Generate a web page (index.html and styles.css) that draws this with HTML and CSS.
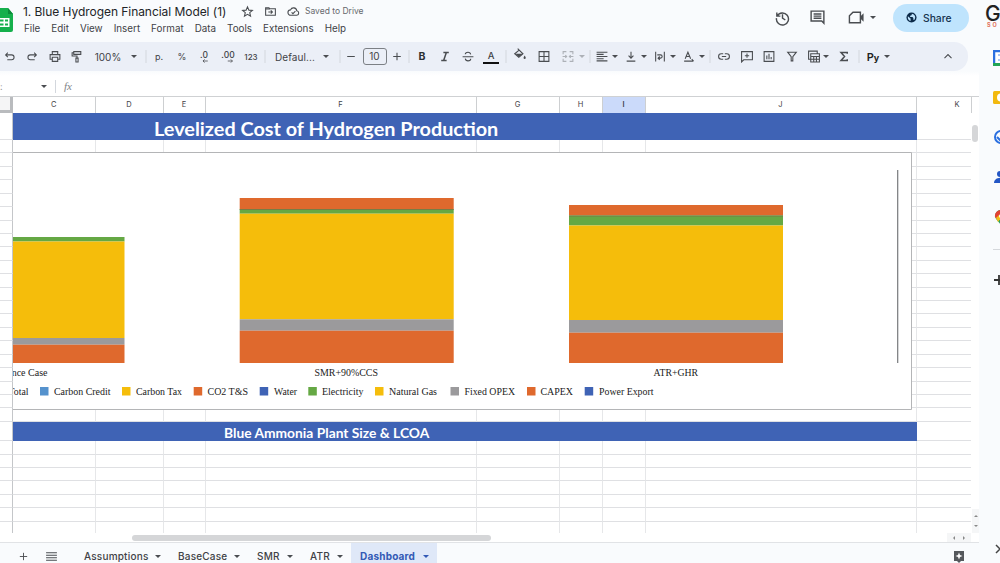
FILE: index.html
```html
<!DOCTYPE html>
<html lang="en">
<head>
    <meta charset="UTF-8">
    <meta name="viewport" content="width=device-width, initial-scale=1.0">
    <title>1. Blue Hydrogen Financial Model (1)</title>
    <link rel="stylesheet" href="styles.css">
</head>
<body>
    <header class="header">
        <svg class="logo" viewBox="0 0 14 26"><path d="M0 1h8l5 6v16a2 2 0 0 1-2 2H0z" fill="#15b04c"/><path d="M8 1l5 6H8z" fill="#0b8a3a"/><path d="M0 11h9.500v9H0z" fill="#fff"/><path d="M0 12.500h3.500v2H0zM5 12.500h3v2H5zM0 16.500h3.500v2H0zM5 16.500h3v2H5z" fill="#15b04c"/></svg>
        <div class="doc">
            <div class="doc-top">
                <span class="doc-title">1. Blue Hydrogen Financial Model (1)</span>
                <svg class="icon star" viewBox="0 0 24 24"><path d="M12 3.500l2.600 6 6.400.5-4.900 4.200 1.500 6.300-5.600-3.400-5.600 3.400 1.500-6.300L3 10l6.400-.5z"/></svg>
                <svg class="icon move" viewBox="0 0 24 24"><path d="M3 5h6l2 2h10v12H3zM3 7.500h8M8 13h7M12.500 10l3 3-3 3"/></svg>
                <svg class="icon cloud" viewBox="0 0 24 24"><path d="M7 19a5 5 0 0 1-.5-10A6 6 0 0 1 18 10.500a4.300 4.300 0 0 1 0 8.500zM8.500 13.500l2.500 2.500 4.500-4.500"/></svg>
                <span class="saved">Saved to Drive</span>
            </div>
            <nav class="menu">
                <span>File</span><span>Edit</span><span>View</span><span>Insert</span><span>Format</span><span>Data</span><span>Tools</span><span>Extensions</span><span>Help</span>
            </nav>
        </div>
        <div class="actions">
            <svg class="icon history" viewBox="0 0 24 24"><path d="M4 5v5h5M4.500 10A8.500 8.500 0 1 1 3.500 13M12 7.500V13l4 2.500"/></svg>
            <svg class="icon comments" viewBox="0 0 24 24"><path d="M3 3h18v17l-3-3H3zM6.500 7h11M6.500 10h11M6.500 13h11"/></svg>
            <svg class="icon meet" viewBox="0 0 24 24"><path d="M7 4.500h10.500v15H2V9.500z"/><path class="solid" d="M17 11l5-5v12l-5-5z"/></svg>
            <i class="caret"></i>
            <button class="share">
                <svg viewBox="0 0 24 24"><circle cx="12" cy="12" r="11" fill="#0b2a49"/><path d="M4 9l6 5v5.500C6 19 3.500 15 4 9zM13 4l-1 3-3 1v3h5l2 2v4l2 .5c3-4 3-9-1-12z" fill="#bfe4fd"/></svg>
                Share
            </button>
        </div>
        <div class="account"><b>G</b><small>SO</small></div>
    </header>

    <div class="layout">
        <main class="main">
            <div class="toolbar">
                <svg class="icon" viewBox="0 0 24 24"><path d="M8 5L4 9l4 4M4 9h11a4.500 4.500 0 0 1 0 9H7"/></svg>
                <svg class="icon" viewBox="0 0 24 24"><path d="M16 5l4 4-4 4M20 9H9a4.500 4.500 0 0 0 0 9h8"/></svg>
                <svg class="icon" viewBox="0 0 24 24"><path d="M7 8V3h10v5M7 17H3V8.500h18V17h-4M7 13.500h10V21H7z"/></svg>
                <svg class="icon" viewBox="0 0 24 24"><path d="M6 3h13v5H6zM6 5H3v6h9v4M10 15h4v7h-4z"/></svg>
                <span class="t-lg">100%</span>
                <i class="caret"></i>
                <i class="sep"></i>
                <span>p.</span>
                <span>%</span>
                <span class="dec">.0<svg viewBox="0 0 8 5"><path d="M8 2.500H2M4 .5l-2 2 2 2"/></svg></span>
                <span class="dec">.00<svg viewBox="0 0 8 5"><path d="M0 2.500h6M4 .5l2 2-2 2"/></svg></span>
                <span class="t-sm">123</span>
                <i class="sep"></i>
                <span class="t-font">Defaul...</span>
                <i class="caret"></i>
                <i class="sep"></i>
                <svg class="icon" viewBox="0 0 24 24"><path d="M5 12h14"/></svg>
                <span class="size">10</span>
                <svg class="icon" viewBox="0 0 24 24"><path d="M5 12h14M12 5v14"/></svg>
                <i class="sep"></i>
                <b>B</b>
                <svg class="icon bold" viewBox="0 0 24 24"><path d="M9 4.500h10M5 19.500h10M14.500 4.500l-5 15"/></svg>
                <svg class="icon" viewBox="0 0 24 24"><path d="M2 12.500h20M17 8c-.5-3-3-4-5-4-3 0-5 1.500-5 4M7 16c.5 3 3 4 5 4 3 0 5-1.500 5-4"/></svg>
                <span class="text-color">A</span>
                <i class="sep"></i>
                <svg class="icon fill" viewBox="0 0 24 24"><path d="M8 1l9 9-7 6-7-6 7-6"/><path class="solid" d="M4 10h13l-7 6zM20 13c3 4 2 6 0 6s-3-2 0-6z"/></svg>
                <svg class="icon" viewBox="0 0 24 24"><path d="M3 3h18v18H3zM12 3v18M3 12h18"/></svg>
                <svg class="icon off" viewBox="0 0 24 24"><path d="M9 3H3v5M3 16v5h6M15 3h6v5M21 16v5h-6M2 12h7M22 12h-7M7 9.500l2.500 2.500L7 14.500M17 9.500L14.500 12l2.500 2.500"/></svg>
                <i class="caret off"></i>
                <i class="sep"></i>
                <svg class="icon" viewBox="0 0 24 24"><path d="M2 4h20M2 8h13M2 12h20M2 16h13M2 20h20"/></svg>
                <i class="caret"></i>
                <svg class="icon" viewBox="0 0 24 24"><path d="M12 3v12M7.500 10.500L12 15l4.500-4.500M4 20.500h16"/></svg>
                <i class="caret"></i>
                <svg class="icon" viewBox="0 0 24 24"><path d="M4 3v18M20 3v18M7 9h6a3 3 0 0 1 0 6H9M11.500 12l-3 3 3 3"/></svg>
                <i class="caret"></i>
                <svg class="icon" viewBox="0 0 24 24"><path d="M5 16l5-12 5 12M7 12h6M3 20.500h17M17 17l3.500 3.500"/></svg>
                <i class="caret"></i>
                <i class="sep"></i>
                <svg class="icon" viewBox="0 0 24 24"><path d="M10.500 7H7a5 5 0 0 0 0 10h3.500M13.500 7H17a5 5 0 0 1 0 10h-3.500M8 12h8"/></svg>
                <svg class="icon" viewBox="0 0 24 24"><path d="M2 3h20v15H6l-4 4zM12 6.500v8M8 10.500h8"/></svg>
                <svg class="icon" viewBox="0 0 24 24"><path d="M3 3h18v18H3zM8 10v7M12 7v10M16 13v4"/></svg>
                <svg class="icon" viewBox="0 0 24 24"><path d="M4 4h16l-6.500 8.500V20h-3v-7.500z"/></svg>
                <svg class="icon table" viewBox="0 0 24 24"><path d="M18 6V2H2v15h4M6 7h16v15H6zM6 12h16M6 17h16M11.500 12v10M16.500 12v10"/></svg>
                <i class="caret"></i>
                <svg class="icon bold" viewBox="0 0 24 24"><path d="M18 7V4.500H6.500l6.500 7.500-6.500 7.500H18V17"/></svg>
                <i class="sep"></i>
                <span class="py">P<small>y</small></span>
                <i class="caret"></i>
                <svg class="icon" viewBox="0 0 24 24"><path d="M5.500 15l6.500-6.500 6.500 6.500"/></svg>
            </div>

            <div class="formula-bar">
                <span class="name-edge">:</span>
                <i class="caret"></i>
                <i class="sep"></i>
                <em>fx</em>
            </div>

            <div class="sheet">
                <div class="columns">
                    <span class="corner"></span><span>C</span><span>D</span><span>E</span><span>F</span><span>G</span><span>H</span><span class="active">I</span><span>J</span><span class="col-k">K</span>
                </div>
                <div class="sheet-body">
                    <div class="rows" id="rows"></div>
                    <div class="scroll-y">
                        <i class="thumb"></i>
                        <span class="arrows"><i class="up"></i><i class="down"></i></span>
                    </div>
                    <svg class="chart" viewBox="13 152 899 258">
                        <path d="M12 152.500H911.500V409.500H12" fill="#fff" stroke="#b4b5b7"/>
                        <path d="M897.700 170V363" stroke="#77797c" stroke-width="1.200"/>
                        <g id="bars"></g>
                        <g id="labels"></g>
                    </svg>
                </div>
                <div class="scroll-x">
                    <i class="thumb"></i>
                    <span class="arrows"><i class="left"></i><i class="right"></i></span>
                </div>
            </div>

            <footer class="tabs">
                <svg class="icon add" viewBox="0 0 24 24"><path d="M4 12h16M12 4v16"/></svg>
                <svg class="icon all" viewBox="0 0 24 24"><path d="M2 5h20M2 9.700h20M2 14.300h20M2 19h20"/></svg>
                <span class="tab assumptions">Assumptions<i class="caret"></i></span>
                <span class="tab basecase">BaseCase<i class="caret"></i></span>
                <span class="tab smr">SMR<i class="caret"></i></span>
                <span class="tab atr">ATR<i class="caret"></i></span>
                <span class="tab dashboard">Dashboard<i class="caret"></i></span>
                <svg class="explore" viewBox="0 0 12 13"><path d="M1 1h10v10H8l-2 2-2-2H1z" fill="#55585c"/><path d="M6 2.500l1 2.500 2.500 1L7 7 6 9.500 5 7 2.500 6 5 5z" fill="#fff"/></svg>
            </footer>
        </main>

        <aside class="side">
            <svg viewBox="0 0 16 16"><path d="M1 1h14v14H1z" fill="#fff" stroke="#2a6fe0" stroke-width="2.500"/><path d="M0 13h15v3H0z" fill="#23a455"/><path d="M5 5h3v5H5" fill="none" stroke="#5b8de8"/></svg>
            <svg viewBox="0 0 16 16"><rect y="1" width="16" height="13" rx="1.500" fill="#f2b90f"/><circle cx="8" cy="7.500" r="4" fill="#fff"/></svg>
            <svg viewBox="0 0 16 16"><circle cx="8" cy="7" r="6" fill="none" stroke="#2a6fe0" stroke-width="2"/><path d="M4 7l3 3 6-7" fill="none" stroke="#2a6fe0" stroke-width="2"/></svg>
            <svg viewBox="0 0 16 16"><circle cx="7" cy="4" r="3" fill="#2457c5"/><path d="M1 13c0-7 13-7 13 0z" fill="#2457c5"/></svg>
            <svg viewBox="0 0 16 16"><path d="M8 15C6 12 2 9 2 6a6 6 0 0 1 12 0c0 3-4 6-6 9z" fill="#28a55b"/><path d="M2 7a6 6 0 0 1 6-7v4L4 9z" fill="#e34234"/><path d="M3 8l3-3 2 3-3 4z" fill="#f4bd18"/><circle cx="8" cy="6" r="2" fill="#fff"/></svg>
            <hr>
            <svg class="plus" viewBox="0 0 16 16"><path d="M3 8h10M8 3v10" stroke="#333" stroke-width="1.800"/></svg>
            <svg class="collapse" viewBox="0 0 16 16"><path d="M5 4l4 4-4 4" fill="none" stroke="#444" stroke-width="1.500"/></svg>
        </aside>
    </div>

    <script src="script.js"></script>
</body>
</html>
```
FILE: styles.css
```css
* {
    box-sizing: border-box;
}
body {
    margin: 0;
    width: 1000px;
    height: 563px;
    overflow: hidden;
    background: #f9fbfd;
    color: #3f4246;
    font-family: Inter, "Liberation Sans", sans-serif;
}
svg {
    display: block;
    flex: none;
}
.icon {
    width: 13px;
    height: 13px;
    fill: none;
    stroke: #4a4d51;
    stroke-width: 2;
}
.icon .solid {
    fill: #4a4d51;
    stroke: none;
}
.icon.bold {
    stroke-width: 2.8;
}
.icon.off {
    stroke: #adb1b7;
}
.caret {
    display: block;
    flex: none;
    width: 0;
    height: 0;
    border: 3px solid transparent;
    border-top: 3px solid #4a4d51;
    border-bottom: 0;
}
.caret.off {
    border-top-color: #adb1b7;
}
.sep {
    width: 1px;
    height: 13px;
    background: #d3d7dd;
}

/* header */
.header {
    display: flex;
    height: 42px;
    overflow: hidden;
}
.logo {
    width: 14px;
    height: 26px;
    margin: 7px 9px 0 0;
}
.doc {
    flex: none;
    width: 400px;
    padding-top: 2px;
}
.doc-top {
    display: flex;
    align-items: center;
    height: 18px;
}
.doc-title {
    width: 203px;
    color: #222427;
    font-size: 12px;
    letter-spacing: -0.05px;
    white-space: nowrap;
}
.star {
    margin-left: 15px;
}
.move {
    margin-left: 10px;
}
.cloud {
    margin-left: 10px;
}
.saved {
    margin-left: 5px;
    color: #66696d;
    font-size: 8.5px;
    white-space: nowrap;
}
.menu {
    display: flex;
    gap: 11px;
    padding: 2px 0 0 1px;
    font-size: 9.8px;
    letter-spacing: 0.02px;
    line-height: 13px;
}
.actions {
    display: flex;
    align-items: center;
    flex: none;
    height: 35px;
    margin-left: 351px;
}
.actions .icon {
    width: 17px;
    height: 17px;
}
.comments {
    margin-left: 18px;
}
.meet {
    margin-left: 22px;
}
.actions .caret {
    margin-left: 5px;
}
.share {
    display: flex;
    align-items: center;
    gap: 6px;
    width: 76px;
    height: 28px;
    margin-left: 17px;
    padding: 0 0 0 13px;
    border: 0;
    border-radius: 14px;
    background: #bfe4fd;
    color: #16324e;
    font: 500 10.3px Inter, sans-serif;
}
.share svg {
    width: 11px;
    height: 11px;
}
.account {
    flex: none;
    width: 40px;
    margin-left: 16px;
    padding-top: 3px;
    color: #222;
}
.account b {
    display: block;
    height: 20px;
    font: 500 21px/21px Inter, sans-serif;
}
.account small {
    display: block;
    padding-left: 2px;
    color: #e2725b;
    font: 700 5.5px/5px Inter, sans-serif;
    letter-spacing: 2px;
}

.layout {
    display: flex;
    height: 521px;
}
.main {
    flex: none;
    width: 979px;
}

/* each track runs from the centre of one tool to the centre of the next */
.toolbar {
    display: grid;
    grid-template-columns: 22px 23px 22px 31px 26px 12px 13px 23px 22px 24px 23px 14px 30px 31px 14px 11px 23.5px 22.5px 12px 13px 23px 23px 23px 14.5px 14.5px 24px 24px 14px 7.5px 12.5px 13px 16px 13px 16px 13px 16px 13px 8px 14px 23px 22px 23px 22px 12px 18px 15px 14px 14px 61px 20px;
    align-items: center;
    width: 968px;
    height: 29px;
    padding-left: 10px;
    border-radius: 0 14px 14px 0;
    background: #ebeff7;
    font-size: 9px;
}
.toolbar > * {
    justify-self: start;
    transform: translateX(-50%);
    white-space: nowrap;
}
.toolbar .t-lg {
    font-size: 10px;
}
.toolbar .t-sm {
    font-size: 8px;
    font-weight: 500;
}
.toolbar .t-font {
    font-size: 10px;
    letter-spacing: 0.1px;
}
.dec {
    display: flex;
    flex-direction: column;
    align-items: flex-end;
    font-size: 8.5px;
    font-weight: 500;
    line-height: 8px;
}
.dec svg {
    width: 7px;
    height: 4px;
    fill: none;
    stroke: #4a4d51;
}
.size {
    width: 24px;
    height: 17px;
    border: 1px solid #7c8085;
    border-radius: 3px;
    font-size: 10px;
    line-height: 15px;
    text-align: center;
}
.toolbar b {
    color: #2d3033;
    font-size: 10.5px;
}
.text-color {
    width: 16px;
    border-bottom: 2px solid #111;
    font-size: 9.5px;
    font-weight: 500;
    line-height: 12px;
    text-align: center;
}
.toolbar .fill {
    width: 14px;
    height: 14px;
    margin-bottom: 3px;
}
.toolbar .table {
    width: 14px;
}
.py {
    color: #222;
    font-size: 11px;
    font-weight: 600;
}
.py small {
    font-size: 9px;
    font-weight: 700;
}

/* formula bar */
.formula-bar {
    display: flex;
    align-items: center;
    height: 26px;
    padding-top: 5px;
    border-bottom: 1px solid #cfd1d3;
    background: linear-gradient(#f9fbfd, #fff 5px);
}
.name-edge {
    width: 41px;
    color: #999;
    font-size: 9px;
}
.formula-bar .sep {
    margin: 0 8px;
}
.formula-bar em {
    color: #808387;
    font: italic 11px "Liberation Serif", serif;
}

/* sheet */
.sheet {
    background: #fff;
}
.columns,
.row {
    display: grid;
    grid-template-columns: 13px 82.5px 68px 42px 271px 83px 43px 43px 271px 55px;
}
.columns {
    height: 16px;
    font-size: 7.5px;
    line-height: 16px;
    text-align: center;
}
.columns span {
    border-right: 1px solid #cdcfd1;
}
.columns .corner {
    border-right: 3px solid #b9bbbe;
    border-bottom: 3px solid #b9bbbe;
    background: #f5f5f6;
}
.columns .active {
    background: #cbdafa;
    font-weight: 600;
}
.columns .col-k {
    padding-left: 27px;
}
.sheet-body {
    display: flex;
    position: relative;
    height: 420px;
}
.rows {
    width: 971.5px;
    height: 420px;
    overflow: hidden;
}
.row {
    grid-template-rows: 100%;
}
.row span {
    border-right: 1px solid #e6e7e9;
    border-bottom: 1px solid #dfe0e3;
}
.row span:first-child {
    border-right-color: #c4c6c9;
}
.row .band {
    grid-column: 2 / 10;
    border: 0;
    overflow: hidden;
    background: #3f63b5;
    color: #fff;
    font-family: Lato, sans-serif;
    font-weight: 700;
    white-space: nowrap;
}
.band.large {
    padding-left: 141px;
    font-size: 19.85px;
    line-height: 30px;
}
.band.small {
    padding-left: 211px;
    font-size: 13.8px;
    line-height: 21px;
}
.chart {
    position: absolute;
    top: 39px;
    left: 13px;
    width: 899px;
    height: 258px;
    font-family: "Liberation Serif", serif;
    font-size: 10px;
    fill: #222;
}
.scroll-y {
    display: flex;
    flex-direction: column;
    justify-content: space-between;
    padding: 12px 0 0 1px;
}
.scroll-y .thumb {
    width: 6px;
    height: 17px;
    border-radius: 3px;
    background: #d5d6d8;
}
.arrows {
    display: flex;
    background: #f5f6f7;
}
.scroll-y .arrows {
    flex-direction: column;
    align-items: center;
    justify-content: space-around;
    width: 7px;
    height: 24px;
}
.arrows i {
    border: 2px solid transparent;
}
.arrows .up {
    border-bottom-color: #888;
}
.arrows .down {
    border-top-color: #888;
}
.scroll-x {
    display: flex;
    align-items: center;
    justify-content: space-between;
    height: 10px;
    padding: 0 8px 0 132px;
    border-bottom: 1px solid #e1e3e6;
}
.scroll-x .thumb {
    width: 359px;
    height: 6px;
    border-radius: 3px;
    background: #d5d6d8;
}
.scroll-x .arrows {
    align-items: center;
    justify-content: space-around;
    width: 24px;
    height: 9px;
}
.arrows .left {
    border-right-color: #888;
}
.arrows .right {
    border-left-color: #888;
}

/* sheet tabs */
.tabs {
    display: flex;
    align-items: center;
    height: 26px;
    font-size: 10px;
    font-weight: 500;
}
.add {
    width: 11px;
    margin-left: 18px;
}
.all {
    margin-left: 16px;
}
.tab {
    display: flex;
    align-items: center;
    justify-content: space-between;
    height: 26px;
    letter-spacing: 0.2px;
}
.assumptions {
    width: 77px;
    margin-left: 26px;
}
.basecase {
    width: 62px;
    margin-left: 17px;
}
.smr {
    width: 36px;
    margin-left: 17px;
}
.atr {
    width: 33px;
    margin-left: 17px;
}
.dashboard {
    width: 86px;
    margin-left: 8px;
    padding: 0 8px 0 9px;
    background: #dfe8f8;
    color: #3259b5;
    font-weight: 700;
}
.dashboard .caret {
    border-top-color: #3259b5;
}
.explore {
    width: 12px;
    height: 13px;
    margin-left: 516px;
}

/* side panel */
.side {
    display: flex;
    flex-direction: column;
    flex: 1;
    gap: 24px;
    padding: 8px 0 0 14px;
    overflow: hidden;
}
.side svg {
    width: 16px;
    height: 16px;
}
.side hr {
    width: 7px;
    height: 1px;
    margin: -1px 0 -1px;
    border: 0;
    background: #d5d8dc;
}
.side .plus {
    margin: -1px 0 0 -2px;
}
.side .collapse {
    margin: 229px 0 0 -2px;
}
```
FILE: script.js
```js
const COLORS = {
    orange: "#df692d",
    green: "#65a844",
    yellow: "#f5bd0b",
    gray: "#9b9a9c",
    blue: "#3f63b5",
    lightBlue: "#5592cd"
};

// Sheet rows: title band, rows behind the chart, second band, empty rows
const rows = document.getElementById("rows");

function addRow(height, bandClass, title) {
    const row = document.createElement("div");
    row.className = "row";
    row.style.height = height + "px";
    if (title) {
        row.innerHTML = `<span></span><span class="band ${bandClass}"></span><span></span>`;
        row.children[1].textContent = title;
    } else {
        row.innerHTML = "<span></span>".repeat(10);
    }
    rows.appendChild(row);
}

addRow(27, "large", "Levelized Cost of Hydrogen Production");
for (let i = 0; i < 21; i++) addRow(13.43);
addRow(19.4, "small", "Blue Ammonia Plant Size & LCOA");
for (let i = 0; i < 7; i++) addRow(13.4);

// Stacked bars: [colour, top, bottom]
const bars = [
    { x: 12, width: 112.500, parts: [["green", 237, 241.500], ["yellow", 241.500, 338], ["gray", 338, 344.700], ["orange", 344.700, 363]] },
    { x: 239.700, width: 214, parts: [["orange", 198, 209], ["green", 209, 213.700], ["yellow", 213.700, 319.300], ["gray", 319.300, 330.700], ["orange", 330.700, 363]] },
    { x: 569, width: 214, parts: [["orange", 205, 215.500], ["green", 215.500, 225.500], ["yellow", 225.500, 320], ["gray", 320, 332.700], ["orange", 332.700, 363]] }
];

document.getElementById("bars").innerHTML = bars.map(bar =>
    bar.parts.map(([color, top, bottom]) =>
        `<rect x="${bar.x}" y="${top}" width="${bar.width}" height="${bottom - top}" fill="${COLORS[color]}"/>`
    ).join("")
).join("") +
    '<path d="M239.700 209.500h214M569 216h214" stroke="#777d45"/>';

// Axis labels and legend: [text, x, width, marker x, marker colour]
const legend = [
    ["Total", 8.500, 20],
    ["Carbon Credit", 54, 56.500, 40, "lightBlue"],
    ["Carbon Tax", 136, 46, 122, "yellow"],
    ["CO2 T&amp;S", 207.500, 40.500, 193.700, "orange"],
    ["Water", 274, 23, 259.700, "blue"],
    ["Electricity", 322, 41.500, 308.300, "green"],
    ["Natural Gas", 389, 48, 375, "yellow"],
    ["Fixed OPEX", 464.500, 50.500, 450.500, "gray"],
    ["CAPEX", 540.500, 32.500, 527, "orange"],
    ["Power Export", 599, 54.500, 584.700, "blue"]
];
const axis = [["Reference Case", -15, 62.500], ["SMR+90%CCS", 314.500, 63.500], ["ATR+GHR", 653.500, 44.500]];
const label = (text, x, y, width) => `<text x="${x}" y="${y}" textLength="${width}" lengthAdjust="spacingAndGlyphs">${text}</text>`;

document.getElementById("labels").innerHTML =
    axis.map(([text, x, width]) => label(text, x, 376, width)).join("") +
    legend.map(([text, x, width, mark, color]) =>
        label(text, x, 394.500, width) +
        (color ? `<rect x="${mark}" y="387" width="8.500" height="8.500" fill="${COLORS[color]}"/>` : "")
    ).join("");
```
